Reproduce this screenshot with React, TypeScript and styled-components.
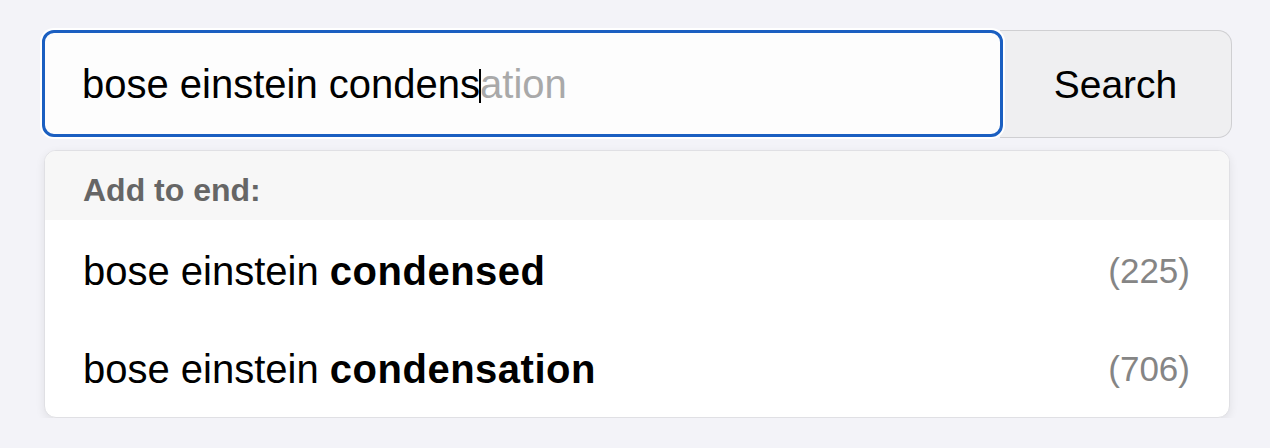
import React from "react";
import styled, { createGlobalStyle } from "styled-components";

const GlobalStyle = createGlobalStyle`
  html, body {
    margin: 0;
    padding: 0;
    background: #f3f3f8;
    font-family: "Liberation Sans", Arial, Helvetica, sans-serif;
  }
`;

const Page = styled.div`
  padding: 30px 0 0 42px;
  width: 1190px;
  display: flex;
  flex-direction: column;
  gap: 13px;
`;

const SearchBar = styled.div`
  display: flex;
  height: 107px;
`;

const InputBox = styled.div`
  flex: 0 0 961px;
  box-sizing: border-box;
  border: 3px solid #1b5fc1;
  border-radius: 12px;
  background: #fdfdfd;
  box-shadow: 0 0 0 2px #ffffff;
  display: flex;
  align-items: center;
  padding: 2px 0 0 37px;
  font-size: 40px;
  color: #000;
  position: relative;
  z-index: 1;
  white-space: pre;
`;

const Typed = styled.span`
  color: #000;
`;

const Caret = styled.span`
  display: inline-block;
  width: 2px;
  height: 34px;
  background: #000;
  margin: 0 -1px;
  position: relative;
  top: 1px;
`;

const Ghost = styled.span`
  color: #a9a9a9;
`;

const SearchButton = styled.button`
  flex: 1;
  margin-left: -3px;
  box-sizing: border-box;
  border: 1.5px solid #cfcfd2;
  border-left: none;
  border-radius: 0 14px 14px 0;
  background: #efeff1;
  font-family: "Liberation Sans", Arial, Helvetica, sans-serif;
  font-size: 39px;
  color: #000;
  padding: 2px 0 0 0;
  height: 108px;
  cursor: pointer;
`;

const Dropdown = styled.div`
  margin: 0 2px;
  box-sizing: border-box;
  border: 1px solid #e0e0e4;
  border-radius: 12px;
  background: #ffffff;
  box-shadow: 0 3px 10px rgba(0, 0, 0, 0.08);
  overflow: hidden;
  padding-bottom: 1px;
`;

const Header = styled.div`
  height: 69px;
  background: #f7f7f7;
  display: flex;
  align-items: center;
  padding: 9px 0 0 38px;
  box-sizing: border-box;
  font-size: 32px;
  font-weight: 700;
  color: #666666;
`;

const Row = styled.div`
  height: 98px;
  display: flex;
  align-items: center;
  justify-content: space-between;
  padding: 4px 39px 0 38px;
  box-sizing: border-box;
  font-size: 40px;
  color: #000;
`;

const Phrase = styled.span`
  white-space: pre;
`;

const Bold = styled.b`
  font-weight: 700;
  letter-spacing: 0.5px;
`;

const Count = styled.span`
  font-size: 35px;
  color: #858585;
`;

const suggestions = [
  { base: "bose einstein ", add: "condensed", count: 225 },
  { base: "bose einstein ", add: "condensation", count: 706 },
];

export default function App() {
  return (
    <>
      <GlobalStyle />
      <Page>
        <SearchBar>
          <InputBox>
            <Typed>bose einstein condens</Typed>
            <Caret />
            <Ghost>ation</Ghost>
          </InputBox>
          <SearchButton>Search</SearchButton>
        </SearchBar>
        <Dropdown>
          <Header>Add to end:</Header>
          {suggestions.map((s) => (
            <Row key={s.add}>
              <Phrase>
                {s.base}
                <Bold>{s.add}</Bold>
              </Phrase>
              <Count>({s.count})</Count>
            </Row>
          ))}
        </Dropdown>
      </Page>
    </>
  );
}
